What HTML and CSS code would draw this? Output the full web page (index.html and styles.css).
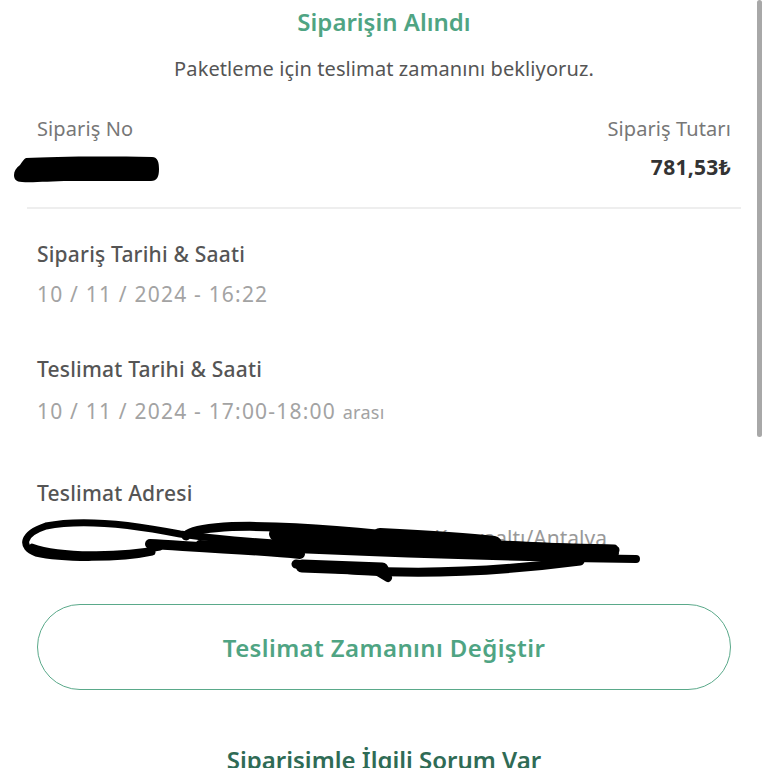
FILE: index.html
```html
<!DOCTYPE html>
<html lang="tr">
<head>
<meta charset="utf-8">
<link rel="stylesheet" href="styles.css">
</head>
<body>
<div class="page">
  <h1 class="title">Siparişin Alındı</h1>
  <p class="subtitle">Paketleme için teslimat zamanını bekliyoruz.</p>

  <div class="summary">
    <div class="col">
      <div class="label">Sipariş No</div>
      <div class="redact-no">
        <svg width="170" height="30" viewBox="0 0 170 30">
          <path d="M26 4 C50 3 90 2 152 3 C158 3 159 9 159 15 C159 23 157 27 151 27 L70 27 C50 27 32 29 22 28 C16 28 14 25 14 21 C14 17 16 14 20 11 C22 8 24 5 26 4 Z" fill="#000"/>
        </svg>
      </div>
    </div>
    <div class="col right">
      <div class="label">Sipariş Tutarı</div>
      <div class="amount">781,53₺</div>
    </div>
  </div>
  <div class="divider"></div>

  <div class="group">
    <div class="gtitle">Sipariş Tarihi &amp; Saati</div>
    <div class="gvalue">10 / 11 / 2024 - 16:22</div>
  </div>
  <div class="group">
    <div class="gtitle">Teslimat Tarihi &amp; Saati</div>
    <div class="gvalue">10 / 11 / 2024 - 17:00-18:00 <span class="small">arası</span></div>
  </div>
  <div class="group addr">
    <div class="gtitle">Teslimat Adresi</div>
    <div class="address">
      <span class="addr-text">Konyaaltı/Antalya</span>
      <svg class="scribble" width="660" height="72" viewBox="0 0 660 72">
        <g fill="none" stroke="#000" stroke-linecap="round">
          <path d="M152 38 C120 45 62 45 36 39 C20 33 22 20 46 12 C80 5 130 10 180 20 C250 30 400 38 616 36" stroke-width="7"/>
          <path d="M32 32 C60 42 120 42 160 34" stroke-width="5"/>
          <path d="M186 22 C190 14 232 11 276 13 C340 15 400 22 450 29 C520 33 570 34 614 35" stroke-width="9"/>
          <path d="M276 20 C360 24 430 31 612 39" stroke-width="14"/>
          <path d="M380 22 C420 24 460 26 494 30" stroke-width="16"/>
          <path d="M200 30 C300 36 450 42 636 45" stroke-width="8"/>
          <path d="M150 30 C200 33 260 36 300 40" stroke-width="10"/>
          <path d="M296 50 C380 62 480 60 580 47" stroke-width="9"/>
          <path d="M302 52 L382 55" stroke-width="13"/>
          <path d="M378 58 L388 64" stroke-width="8"/>
        </g>
      </svg>
    </div>
  </div>

  <button class="btn-outline">Teslimat Zamanını Değiştir</button>

  <div class="question">Siparişimle İlgili Sorum Var</div>
</div>
<div class="scrollbar"></div>
</body>
</html>
```

FILE: styles.css
```css
html, body {
  margin: 0;
  padding: 0;
  background: #fff;
  overflow: hidden;
}
body {
  font-family: "Noto Sans", "Open Sans", sans-serif;
  color: #555;
}
.page {
  padding: 0 37px;
  width: 694px;
}
.title {
  margin: 0;
  padding-top: 6px;
  text-align: center;
  font-size: 24px;
  line-height: 32px;
  font-weight: 600;
  color: #4fa483;
}
.subtitle {
  margin: 18px 0 0;
  text-align: center;
  font-size: 20px;
  line-height: 26px;
  letter-spacing: 0.1px;
  color: #555;
}
.summary {
  display: flex;
  justify-content: space-between;
  margin-top: 34px;
}
.col {
  display: flex;
  flex-direction: column;
}
.col.right {
  align-items: flex-end;
}
.label {
  font-size: 20px;
  line-height: 26px;
  letter-spacing: 0.1px;
  color: #777;
}
.redact-no {
  margin: 12px 0 0 -37px;
  height: 30px;
}
.amount {
  margin-top: 12px;
  font-size: 21px;
  line-height: 26px;
  letter-spacing: 0.3px;
  font-weight: 700;
  color: #333;
}
.divider {
  margin: 23px -10px 0;
  height: 2px;
  background: #eeeeee;
}
.group {
  margin-top: 32px;
}
.group + .group {
  margin-top: 49px;
}
.group.addr {
  margin-top: 55px;
}
.gtitle {
  font-size: 21px;
  line-height: 26px;
  letter-spacing: 0.2px;
  color: #555;
  font-weight: 500;
}
.gvalue {
  margin-top: 14px;
  font-size: 21px;
  line-height: 26px;
  letter-spacing: 1.2px;
  color: #a3a3a3;
}
.group + .group .gvalue {
  margin-top: 16px;
}
.small {
  font-size: 18px;
  letter-spacing: 0.3px;
}
.address {
  position: relative;
  height: 72px;
  margin-left: -37px;
}
.addr-text {
  position: absolute;
  right: 124px;
  top: 18px;
  font-size: 21px;
  color: #999;
  white-space: nowrap;
}
.scribble {
  position: absolute;
  left: 0;
  top: 8px;
}
.btn-outline {
  display: block;
  box-sizing: border-box;
  width: 100%;
  height: 86px;
  margin-top: 26px;
  border: 1.5px solid #5aa98a;
  border-radius: 43px;
  background: #fff;
  font-family: "Noto Sans", "Open Sans", sans-serif;
  letter-spacing: 0.4px;
  font-size: 24px;
  font-weight: 600;
  color: #4fa483;
}
.question {
  margin-top: 55px;
  text-align: center;
  font-size: 24px;
  line-height: 30px;
  font-weight: 600;
  color: #2f6b55;
}
.scrollbar {
  position: absolute;
  left: 757px;
  top: 0;
  width: 5px;
  height: 437px;
  border-radius: 3px;
  background: #a8a8a8;
}
```
